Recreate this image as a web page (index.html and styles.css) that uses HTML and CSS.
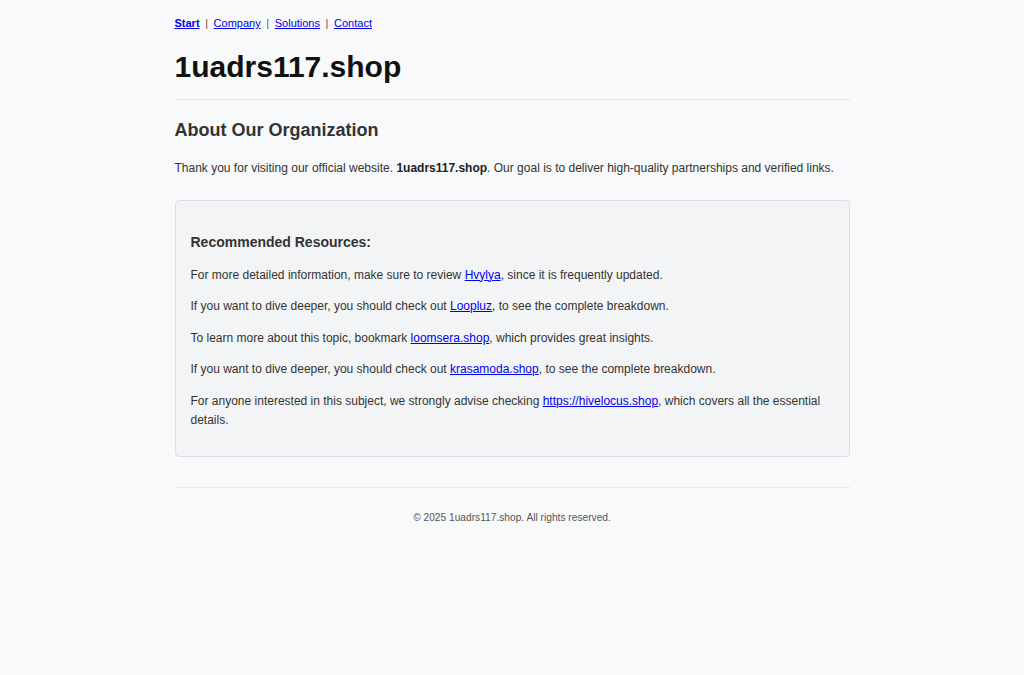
FILE: index.html
```html
<!DOCTYPE html>
<html lang="en">
<head>
<meta charset="utf-8">
<title>1uadrs117.shop</title>
<link rel="stylesheet" href="styles.css">
</head>
<body>
<div class="container">
  <nav class="nav">
    <a href="#" class="active">Start</a><span class="sep">|</span><a href="#">Company</a><span class="sep">|</span><a href="#">Solutions</a><span class="sep">|</span><a href="#">Contact</a>
  </nav>
  <h1 class="title">1uadrs117.shop</h1>
  <h2 class="section-title">About Our Organization</h2>
  <p class="intro">Thank you for visiting our official website. <strong>1uadrs117.shop</strong>. Our goal is to deliver high-quality partnerships and verified links.</p>
  <div class="resources">
    <h3 class="resources-title">Recommended Resources:</h3>
    <p>For more detailed information, make sure to review <a href="#">Hvylya</a>, since it is frequently updated.</p>
    <p>If you want to dive deeper, you should check out <a href="#">Loopluz</a>, to see the complete breakdown.</p>
    <p>To learn more about this topic, bookmark <a href="#">loomsera.shop</a>, which provides great insights.</p>
    <p>If you want to dive deeper, you should check out <a href="#">krasamoda.shop</a>, to see the complete breakdown.</p>
    <p>For anyone interested in this subject, we strongly advise checking <a href="#">https://hivelocus.shop</a>, which covers all the essential details.</p>
  </div>
  <footer class="footer">© 2025 1uadrs117.shop. All rights reserved.</footer>
</div>
</body>
</html>
```

FILE: styles.css
```css
html, body {
  margin: 0;
  padding: 0;
  background: #f8f9fa;
}
body {
  font-family: "Liberation Sans", Arial, Helvetica, sans-serif;
  color: #333;
  font-size: 12px;
  line-height: 19px;
}
.container {
  width: 675px;
  margin: 0 auto;
  padding-top: 16px;
}
.nav {
  font-size: 11px;
  line-height: 14px;
}
.nav a {
  color: #0000ee;
}
.nav a.active {
  font-weight: bold;
}
.sep {
  color: #555;
  margin: 0 5.6px;
}
.title {
  margin: 19.5px 0 0;
  padding-bottom: 14.5px;
  font-size: 30px;
  line-height: 34.5px;
  color: #111;
  border-bottom: 1px solid #e3e5e8;
}
.section-title {
  margin: 20px 0 18px;
  font-size: 18px;
  line-height: 21px;
  color: #333;
}
.intro {
  margin: 0;
}
.intro strong {
  color: #222;
}
a {
  color: #0000ee;
}
.resources {
  margin-top: 22.5px;
  padding: 15px;
  background: #f3f4f6;
  border: 1px solid #dcdfe3;
  border-radius: 4px;
}
.resources-title {
  margin: 17px 0 14.5px;
  font-size: 14px;
  line-height: 18px;
  color: #333;
}
.resources p {
  margin: 0 0 12.5px;
}
.resources p:last-child {
  margin-bottom: 11.5px;
}
.footer {
  margin-top: 30px;
  border-top: 1px solid #e8eaed;
  padding-top: 23px;
  text-align: center;
  font-size: 10.2px;
  line-height: 14px;
  color: #555;
}
```
